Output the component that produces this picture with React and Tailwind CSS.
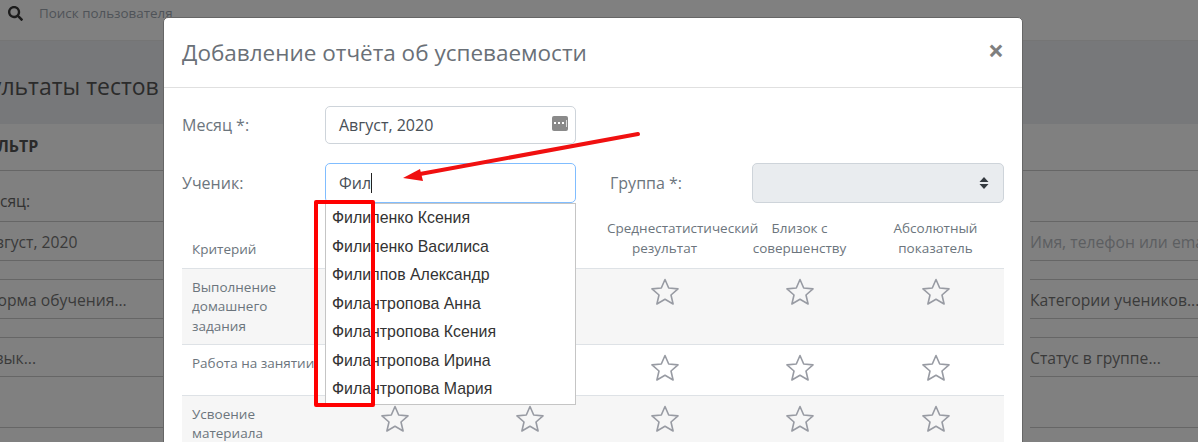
import React from "react";
import { FaSearch } from "react-icons/fa";

const students = [
  "Филипенко Ксения",
  "Филипенко Василиса",
  "Филиппов Александр",
  "Филантропова Анна",
  "Филантропова Ксения",
  "Филантропова Ирина",
  "Филантропова Мария",
];

const criteria = [
  { name: "Выполнение домашнего задания", height: "h-[76px]", striped: true },
  { name: "Работа на занятии", height: "h-[51px]", striped: false },
  { name: "Усвоение материала", height: "h-[76px]", striped: true },
];

const Star = () => (
  <svg className="mx-auto block" width="28" height="28" viewBox="0 0 28 28" fill="none">
    <polygon
      points="14,1.5 17.7,10 27,10.9 20,17 22.1,26 14,21.3 5.9,26 8,17 1,10.9 10.3,10"
      stroke="#989ba3"
      strokeWidth="1.6"
      strokeLinejoin="round"
    />
  </svg>
);

const BackRow = ({ children, muted, className = "" }) => (
  <div className={`h-[40px] border-y border-[#666] flex items-center whitespace-nowrap pt-[3px] text-[15.7px] ${muted ? "text-[#5c5e61]" : "text-[#3a3a3a]"} ${className}`}>
    {children}
  </div>
);

const Page = () => (
  <div className="w-[1198px] h-[442px] overflow-hidden bg-[#808080] text-[#333]">
    <div className="h-[41px] flex items-start border-b border-[#757575]">
      <FaSearch className="ml-[8px] mt-[6px] text-[15px] text-[#1c1c1c]" />
      <span className="ml-[16px] mt-[3px] text-[13.4px] text-[#4f5358]">Поиск пользователя</span>
    </div>
    <div className="h-[83px] bg-[#77787a] flex items-center pt-[7px]">
      <h1 className="-ml-[48px] whitespace-nowrap text-[23px] text-[#2b2b2b]">Результаты тестов по</h1>
    </div>
    <div className="h-[47px] border-b border-[#666] flex items-center pb-[2px]">
      <span className="-ml-[30px] font-bold text-[16px] text-[#2a2a2a]">ФИЛЬТР</span>
    </div>
    <div className="flex justify-between">
      <div className="w-[164px] overflow-hidden">
        <div className="h-[50px] pt-[19px] -ml-[23px] text-[15.7px] text-[#333]">Месяц:</div>
        <BackRow className="-ml-[15px]">Август, 2020</BackRow>
        <BackRow className="mt-[18px] -ml-[15px]">Форма обучения...</BackRow>
        <BackRow className="mt-[18px] -ml-[14px]">Язык...</BackRow>
        <BackRow className="mt-[50px] pl-[30px]">Ученик (М</BackRow>
      </div>
      <div className="w-[168px] overflow-hidden pt-[50px]">
        <BackRow muted>Имя, телефон или email</BackRow>
        <BackRow className="mt-[18px]">Категории учеников...</BackRow>
        <BackRow className="mt-[18px]">Статус в группе...</BackRow>
        <BackRow className="mt-[50px]">Статус</BackRow>
      </div>
    </div>
  </div>
);

const Modal = () => (
  <div className="absolute left-[163px] top-[17px] w-[860px] h-[600px] bg-white border border-[#666] rounded-[5px] text-[#6c757d]">
    <div className="h-[70px] border-b border-[#e0e0e0] flex items-center justify-between pl-[18px] pr-[18px]">
      <h5 className="text-[22.5px] text-[#6a7077]">Добавление отчёта об успеваемости</h5>
      <button className="text-[28px] font-bold leading-none text-[#7f7f7f] pb-[6px]">×</button>
    </div>
    <div className="pt-[18px] pl-[18px] pr-[18px] relative">
      <div className="flex items-center text-[16px]">
        <label className="w-[143px] text-[#6c757d]">Месяц *:</label>
        <div className="w-[251px] h-[38px] border border-[#ced4da] rounded-[5px] flex items-center justify-between pl-[13px] pr-[7px] text-[#495057]">
          Август, 2020
          <span className="w-[16px] h-[15px] rounded-[2px] bg-[#8a8a8a] flex items-center gap-[2px] pl-[2px] -mt-[4px]">
            <i className="w-[2px] h-[2px] bg-white" />
            <i className="w-[2px] h-[2px] bg-white" />
            <i className="w-[2px] h-[2px] bg-white" />
            <i className="w-px h-[7px] bg-[#dddddd]" />
          </span>
        </div>
      </div>
      <div className="flex items-center text-[16px] mt-[19px]">
        <label className="w-[143px] text-[#6c757d]">Ученик:</label>
        <div className="w-[251px] h-[40px] border border-[#80bdff] rounded-[5px] flex items-center pl-[13px] text-[#495057]">
          Фил
          <span className="inline-block w-px h-[20px] bg-[#222]" />
        </div>
        <label className="ml-[34px] w-[142px] text-[#6c757d]">Группа *:</label>
        <div className="w-[252px] h-[40px] border border-[#ced4da] rounded-[5px] bg-[#e9ecef] flex items-center justify-end pr-[14px]">
          <svg width="10" height="12" viewBox="0 0 10 12" fill="#343a40">
            <polygon points="5,0 9.5,5 0.5,5" />
            <polygon points="5,12 9.5,7 0.5,7" />
          </svg>
        </div>
      </div>
      <table className="mt-[7px] w-[822px] table-fixed border-collapse text-[13.5px]">
        <thead>
          <tr className="h-[58px] border-b border-[#dee2e6] align-bottom">
            <th className="w-[145px] pl-[10px] pb-[8px] text-left font-normal">Критерий</th>
            <th className="w-[135px] font-normal"></th>
            <th className="w-[135px] font-normal"></th>
            <th className="w-[135px] font-normal px-[10px] pb-[9px] whitespace-nowrap">Среднестатистический<br />результат</th>
            <th className="w-[135px] font-normal px-[10px] pb-[9px]">Близок с<br />совершенству</th>
            <th className="font-normal px-[10px] pb-[9px]">Абсолютный<br />показатель</th>
          </tr>
        </thead>
        <tbody>
          {criteria.map((row) => (
            <tr key={row.name} className={`${row.height} border-b border-[#dee2e6] align-top ${row.striped ? "bg-[#f6f6f6]" : ""}`}>
              <td className="pl-[10px] pt-[9px] pr-[10px] leading-[19.5px]">
                <span className={row.striped ? "" : "whitespace-nowrap"}>{row.name}</span>
              </td>
              {[0, 1, 2, 3, 4].map((i) => (
                <td key={i} className="pt-[9px]"><Star /></td>
              ))}
            </tr>
          ))}
        </tbody>
      </table>
      <ul className="absolute left-[161px] top-[115px] w-[251px] h-[202px] bg-white border border-[#c5c5c5] pl-[6px] font-['Liberation_Sans',sans-serif] text-[15.9px] text-[#333]">
        {students.map((s) => (
          <li key={s} className="h-[28.5px] leading-[28px] whitespace-nowrap">{s}</li>
        ))}
      </ul>
    </div>
  </div>
);

export default function App() {
  return (
    <div className="relative w-[1198px] h-[442px] overflow-hidden font-['Open_Sans',sans-serif]">
      <Page />
      <Modal />
      {/* red marks drawn on top of the screenshot */}
      <div className="absolute left-[314px] top-[200px] w-[61px] h-[207px] border-[4px] border-[#ff0000] rounded-[2px]" />
      <svg className="absolute left-[400px] top-[130px]" width="245" height="55" viewBox="0 0 245 55" fill="none">
        <line x1="238" y1="4" x2="20" y2="44" stroke="#f01010" strokeWidth="4" strokeLinecap="round" />
        <polygon points="3,48 20,39 23,51" fill="#f01010" />
      </svg>
    </div>
  );
}
